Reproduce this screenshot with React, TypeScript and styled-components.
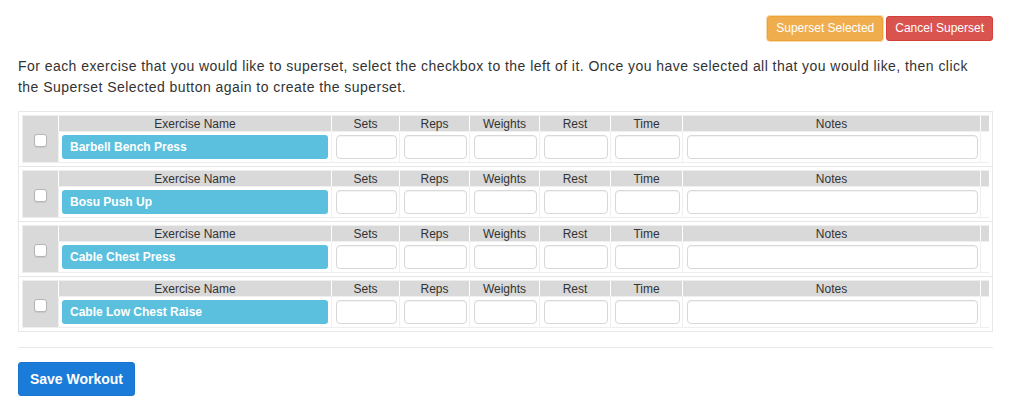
import React from "react";
import styled, { createGlobalStyle } from "styled-components";

const GlobalStyle = createGlobalStyle`
  html, body { margin: 0; padding: 0; background: #fff; }
  body { font-family: "Liberation Sans", Arial, Helvetica, sans-serif; color: #333; }
  * { box-sizing: border-box; }
`;

const Page = styled.div`
  width: 975px;
  margin-left: 18px;
  padding-top: 16px;
`;

const TopBar = styled.div`
  display: flex;
  justify-content: flex-end;
  gap: 3px;
`;

const SmallButton = styled.button<{ $variant: "warning" | "danger" }>`
  font-family: "Liberation Sans", Arial, sans-serif;
  font-size: 12px;
  line-height: 17px;
  padding: 3px 8px;
  color: #fff;
  border-radius: 3px;
  border: 1px solid ${(p) => (p.$variant === "warning" ? "#eea236" : "#d43f3a")};
  background: ${(p) => (p.$variant === "warning" ? "#f0ad4e" : "#d9534f")};
  box-shadow: ${(p) => (p.$variant === "warning" ? "0 0 0 1px rgba(240,173,78,0.45)" : "none")};
  cursor: pointer;
`;

const Intro = styled.p`
  max-width: 958px;
  margin: 15px 0 13px;
  font-size: 14px;
  line-height: 21px;
  letter-spacing: 0.45px;
  color: #333;
`;

const Panel = styled.div`
  border: 1px solid #e8e8e8;
`;

const RowWrap = styled.div<{ $first?: boolean }>`
  padding: 3px;
  border-top: ${(p) => (p.$first ? "none" : "1px solid #e6e6e6")};
`;

const RowGrid = styled.div`
  display: grid;
  grid-template-columns: 35px 272px 67px 69px 69px 70px 71px 297px 8px;
  grid-template-rows: 15px 30px;
  column-gap: 1px;
  row-gap: 1px;
  border: 1px solid #eee;
  background: #f0f0f0;
`;

const CheckCell = styled.div`
  grid-row: 1 / span 2;
  background: #d9d9d9;
  display: flex;
  align-items: center;
  justify-content: center;
  padding-top: 2px;
`;

const Check = styled.input`
  appearance: none;
  -webkit-appearance: none;
  margin: 0;
  width: 13px;
  height: 13px;
  background: #fff;
  border: 1px solid #b5b5b5;
  border-radius: 3px;
  box-shadow: 0 1px 1px rgba(0, 0, 0, 0.08);
`;

const HeadCell = styled.div`
  background: #d9d9d9;
  font-size: 12px;
  line-height: 16px;
  text-align: center;
  color: #333;
  white-space: nowrap;
  border-left: 1px solid #fff;
  margin-left: -1px;
`;

const BodyCell = styled.div<{ $pad?: string }>`
  background: #fff;
  padding: ${(p) => p.$pad ?? "3px 2px 3px 4px"};
  display: flex;
`;

const ExerciseButton = styled.div`
  flex: 1;
  height: 24px;
  background: #5bc0de;
  border-radius: 3px;
  color: #fff;
  font-size: 12px;
  font-weight: bold;
  line-height: 24px;
  padding-left: 8px;
`;

const Field = styled.input`
  flex: 1;
  min-width: 0;
  height: 24px;
  border: 1px solid #d8d8d8;
  border-radius: 4px;
  box-shadow: inset 0 1px 1px rgba(0, 0, 0, 0.05);
  background: #fff;
  outline: none;
`;

const Divider = styled.hr`
  border: 0;
  border-top: 1px solid #e8e8e8;
  margin: 15px 0 14px;
`;

const SaveButton = styled.button`
  font-family: "Liberation Sans", Arial, sans-serif;
  font-size: 14px;
  font-weight: bold;
  color: #fff;
  background: #1a7bd8;
  border: 1px solid #1874cc;
  border-radius: 3px;
  width: 117px;
  height: 34px;
  padding: 0;
  cursor: pointer;
`;

const exercises = ["Barbell Bench Press", "Bosu Push Up", "Cable Chest Press", "Cable Low Chest Raise"];
const fields = ["Sets", "Reps", "Weights", "Rest", "Time", "Notes"];

export default function App() {
  return (
    <>
      <GlobalStyle />
      <Page>
        <TopBar>
          <SmallButton $variant="warning">Superset Selected</SmallButton>
          <SmallButton $variant="danger">Cancel Superset</SmallButton>
        </TopBar>
        <Intro>
          For each exercise that you would like to superset, select the checkbox to the left of it. Once you have
          selected all that you would like, then click the Superset Selected button again to create the superset.
        </Intro>
        <Panel>
          {exercises.map((name, i) => (
            <RowWrap key={name} $first={i === 0}>
              <RowGrid>
                <CheckCell>
                  <Check type="checkbox" />
                </CheckCell>
                <HeadCell>Exercise Name</HeadCell>
                {fields.map((f) => (
                  <HeadCell key={f}>{f}</HeadCell>
                ))}
                <HeadCell />
                <BodyCell $pad="3px">
                  <ExerciseButton>{name}</ExerciseButton>
                </BodyCell>
                {fields.map((f) => (
                  <BodyCell key={f}>
                    <Field type="text" />
                  </BodyCell>
                ))}
                <BodyCell />
              </RowGrid>
            </RowWrap>
          ))}
        </Panel>
        <Divider />
        <SaveButton>Save Workout</SaveButton>
      </Page>
    </>
  );
}
